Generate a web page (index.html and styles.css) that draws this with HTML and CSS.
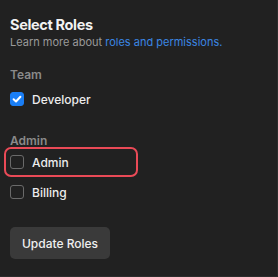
FILE: index.html
```html
<!DOCTYPE html>
<html>
<head>
<meta charset="utf-8">
<link rel="stylesheet" href="styles.css">
</head>
<body>
<div class="panel">
  <h2 class="title">Select Roles</h2>
  <p class="sub">Learn more about <a href="#">roles and permissions.</a></p>
  <div class="group">
    <div class="group-label">Team</div>
    <label class="row"><span class="box checked"><svg viewBox="0 0 14 14" width="14" height="14"><path d="M3.6 7.3 L6 9.5 L10.4 4.7" fill="none" stroke="#fff" stroke-width="2" stroke-linecap="round" stroke-linejoin="round"/></svg></span>Developer</label>
  </div>
  <div class="group second">
    <div class="group-label">Admin</div>
    <label class="row hl"><span class="box"></span>Admin</label>
    <label class="row"><span class="box"></span>Billing</label>
  </div>
  <button class="btn">Update Roles</button>
</div>
</body>
</html>
```
FILE: styles.css
```css
html, body { margin: 0; padding: 0; background: #212121; }
body { font-family: Inter, "Noto Sans", sans-serif; color: #eaeaea; width: 278px; height: 277px; overflow: hidden; border-right: 1px solid #2c2c2c; border-bottom: 1px solid #2c2c2c; box-sizing: border-box; }
.panel { padding: 15px 10px 0 10px; }
.title { margin: 0; font-size: 14.5px; font-weight: 700; color: #f2f2f2; line-height: 19px; letter-spacing: -0.35px; }
.sub { margin: 0; font-size: 11px; line-height: 16px; color: #9a9a9a; }
.sub a { color: #3b86e3; text-decoration: none; }
.group { margin-top: 17px; display: flex; flex-direction: column; gap: 8px; }
.group.second { margin-top: 23px; }
.group-label { font-size: 12px; font-weight: 600; color: #8a8a8a; line-height: 16px; margin-bottom: -3px; }
.group.second .group-label { margin-bottom: -6px; }
.row { display: flex; align-items: center; gap: 8px; font-size: 12px; font-weight: 500; color: #ececec; height: 22px; }
.row.hl { width: 124px; padding-left: 2px; margin-left: -2px; outline: 2px solid #ea4a57; outline-offset: 2px; border-radius: 3px; }
.box { width: 14px; height: 14px; box-sizing: border-box; border: 1px solid #6a6a6a; border-radius: 3px; display: inline-flex; flex: none; }
.box.checked { background: #1a7ef5; border-color: #1a7ef5; }
.box svg { display: block; margin: -1px; }
.btn { margin-top: 24px; font-family: inherit; background: #3a3a3a; color: #f0f0f0; border: none; border-radius: 5px; font-size: 12px; font-weight: 500; width: 100px; height: 32px; padding: 0; }
```
